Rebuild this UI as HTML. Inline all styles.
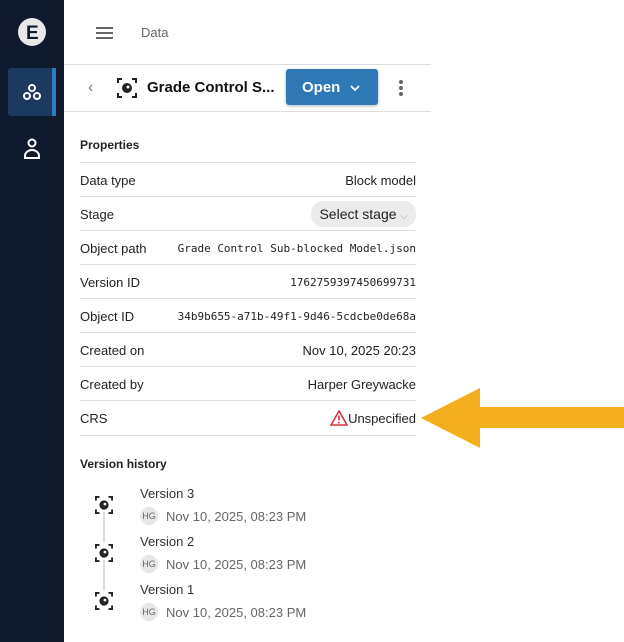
<!DOCTYPE html>
<html><head><style>
body{margin:0;width:624px;height:642px;background:#fff;font-family:"Liberation Sans",sans-serif;position:relative;overflow:hidden}
.sb{position:absolute;left:0;top:0;width:64px;height:642px;background:#101a2e}
.abs{position:absolute}
.row{position:absolute;left:80px;width:336px;height:34px;border-top:1px solid #e0e0e0;font-size:13px;color:#222;display:flex;align-items:center;justify-content:space-between}
.mono{font-family:"DejaVu Sans Mono","Liberation Mono",monospace;font-size:11px}
.vt{position:absolute;left:140px;font-size:13px;color:#333}
.vd{position:absolute;left:140px;font-size:13px;color:#666;display:flex;align-items:center}
.hg{width:18px;height:18px;border-radius:50%;background:#e8e8e8;font-size:9px;color:#666;display:inline-flex;align-items:center;justify-content:center;margin-right:8px}
</style></head><body>
<div class="sb"></div>
<div class="abs" style="left:18px;top:18px;width:28px;height:28px;border-radius:50%;background:#e8e8e8"></div>
<div class="abs" style="left:26px;top:23px;font:bold 19px 'Liberation Sans';color:#101a2e">E</div>
<div class="abs" style="left:8px;top:68px;width:48px;height:48px;border-radius:3px;background:#1c3a5f"></div>
<div class="abs" style="left:52px;top:68px;width:4px;height:48px;background:#2f7bbd"></div>
<svg class="abs" style="left:22px;top:82px" width="20" height="20" viewBox="0 0 20 20" fill="none" stroke="#fff" stroke-width="2"><circle cx="10" cy="6" r="3"/><circle cx="5" cy="14" r="3"/><circle cx="15" cy="14" r="3"/></svg>
<svg class="abs" style="left:22px;top:138px" width="20" height="22" viewBox="0 0 20 22" fill="none" stroke="#fff" stroke-width="2"><circle cx="10" cy="5" r="3.5"/><path d="M3 20v-2a7 6 0 0 1 14 0v2z"/></svg>
<div class="abs" style="left:96px;top:27px;width:17px;height:2px;background:#666;box-shadow:0 5px 0 #666,0 10px 0 #666"></div>
<div class="abs" style="left:141px;top:25px;font-size:13px;color:#666">Data</div>
<div class="abs" style="left:64px;top:64px;width:367px;height:1px;background:#ddd"></div>
<div class="abs" style="left:64px;top:111px;width:367px;height:1px;background:#ddd"></div>
<div class="abs" style="left:88px;top:79px;font-size:16px;color:#777">‹</div>
<svg class="abs" style="left:117px;top:78px" width="20" height="20" viewBox="0 0 20 20" fill="none" stroke="#222" stroke-width="2"><path d="M1 5V1h4M15 1h4v4M19 15v4h-4M5 19H1v-4"/><circle cx="10" cy="10" r="4" fill="#222"/><circle cx="11" cy="9" r="1.5" fill="#fff" stroke="none"/></svg>
<div class="abs" style="left:147px;top:79px;font-size:15px;font-weight:bold;color:#111">Grade Control S...</div>
<div class="abs" style="left:286px;top:69px;width:92px;height:36px;border-radius:3px;background:#2f78b8;color:#fff;font-size:15px;font-weight:bold;box-shadow:0 1px 3px rgba(0,0,0,.3)"><span style="position:absolute;left:16px;top:10px">Open</span><svg style="position:absolute;left:64px;top:16px" width="10" height="7" viewBox="0 0 10 7" fill="none" stroke="#fff" stroke-width="1.8"><path d="M1 1l4 4 4-4"/></svg></div>
<div class="abs" style="left:399px;top:80px;width:4px;height:4px;border-radius:50%;background:#666;box-shadow:0 6px 0 #666,0 12px 0 #666"></div>
<div class="abs" style="left:80px;top:138px;font-size:12px;font-weight:bold;color:#222">Properties</div>
<div class="row" style="top:162px"><span>Data type</span><span>Block model</span></div>
<div class="row" style="top:196px"><span>Stage</span><span style="background:#ebebeb;border-radius:12px;padding:5px 8px;font-size:14px">Select stage <span style="color:#aaa;font-size:10px">⌵</span></span></div>
<div class="row" style="top:230px"><span>Object path</span><span class="mono">Grade Control Sub-blocked Model.json</span></div>
<div class="row" style="top:264px"><span>Version ID</span><span class="mono">1762759397450699731</span></div>
<div class="row" style="top:298px"><span>Object ID</span><span class="mono">34b9b655-a71b-49f1-9d46-5cdcbe0de68a</span></div>
<div class="row" style="top:332px"><span>Created on</span><span>Nov 10, 2025 20:23</span></div>
<div class="row" style="top:366px"><span>Created by</span><span>Harper Greywacke</span></div>
<div class="row" style="top:400px;border-bottom:1px solid #e0e0e0"><span>CRS</span><span style="display:flex;align-items:center"><svg width="18" height="16" viewBox="0 0 18 16"><path d="M9 1L1 15h16z" fill="none" stroke="#d9333f" stroke-width="1.6"/><path d="M9 5.5v5M9 12v1.5" stroke="#d9333f" stroke-width="1.6"/></svg>Unspecified</span></div>
<svg class="abs" style="left:420px;top:387px" width="204" height="62"><path d="M1 31L60 1V20H204V41H60V61z" fill="#f2ae1c"/></svg>
<div class="abs" style="left:80px;top:457px;font-size:12px;font-weight:bold;color:#222">Version history</div>
<div class="abs" style="left:103px;top:512px;width:2px;height:30px;background:#ddd"></div>
<div class="abs" style="left:103px;top:560px;width:2px;height:30px;background:#ddd"></div>
<svg class="abs" style="left:95px;top:496px" width="18" height="18" viewBox="0 0 20 20" fill="none" stroke="#222" stroke-width="2.2"><path d="M1 5V1h4M15 1h4v4M19 15v4h-4M5 19H1v-4"/><circle cx="10" cy="10" r="4" fill="#222"/><circle cx="11" cy="9" r="1.5" fill="#fff" stroke="none"/></svg>
<svg class="abs" style="left:95px;top:544px" width="18" height="18" viewBox="0 0 20 20" fill="none" stroke="#222" stroke-width="2.2"><path d="M1 5V1h4M15 1h4v4M19 15v4h-4M5 19H1v-4"/><circle cx="10" cy="10" r="4" fill="#222"/><circle cx="11" cy="9" r="1.5" fill="#fff" stroke="none"/></svg>
<svg class="abs" style="left:95px;top:592px" width="18" height="18" viewBox="0 0 20 20" fill="none" stroke="#222" stroke-width="2.2"><path d="M1 5V1h4M15 1h4v4M19 15v4h-4M5 19H1v-4"/><circle cx="10" cy="10" r="4" fill="#222"/><circle cx="11" cy="9" r="1.5" fill="#fff" stroke="none"/></svg>
<div class="vt" style="top:486px">Version 3</div>
<div class="vd" style="top:507px"><span class="hg">HG</span>Nov 10, 2025, 08:23 PM</div>
<div class="vt" style="top:534px">Version 2</div>
<div class="vd" style="top:555px"><span class="hg">HG</span>Nov 10, 2025, 08:23 PM</div>
<div class="vt" style="top:582px">Version 1</div>
<div class="vd" style="top:603px"><span class="hg">HG</span>Nov 10, 2025, 08:23 PM</div>
</body></html>
